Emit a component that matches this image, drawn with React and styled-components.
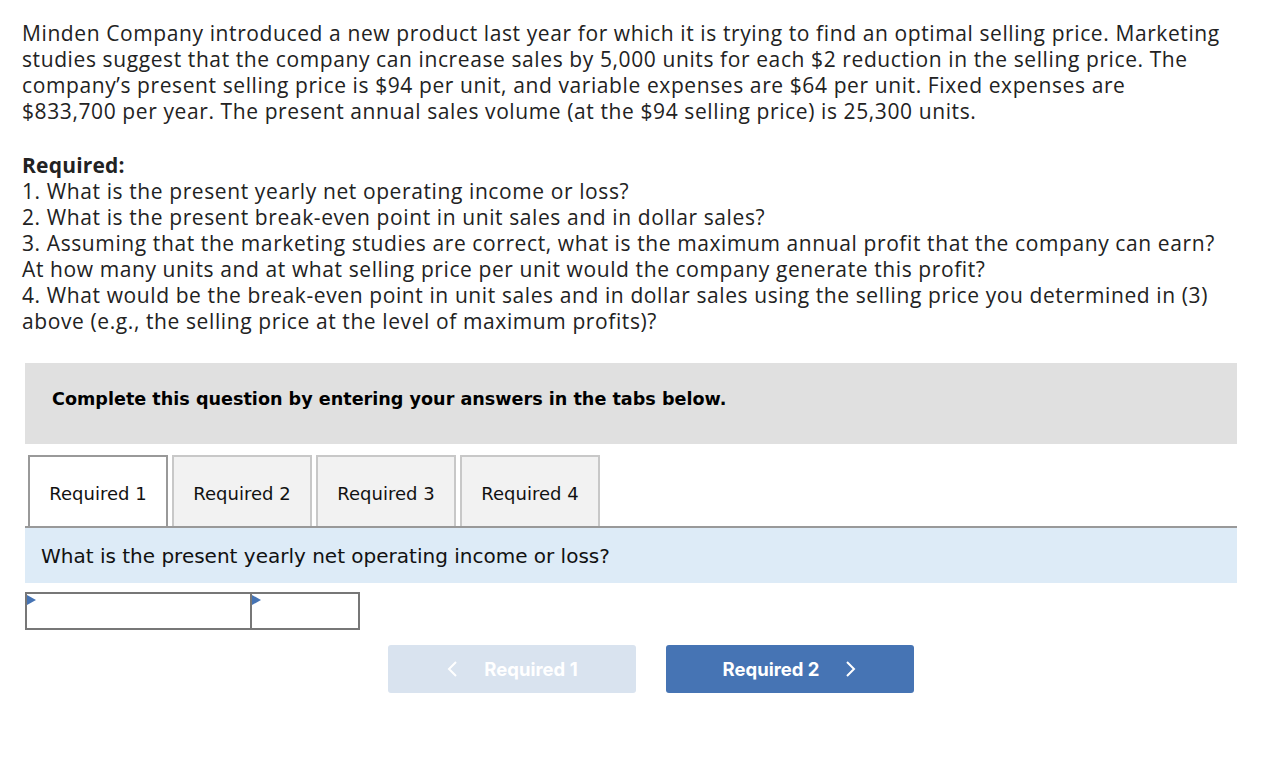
import styled, { createGlobalStyle } from "styled-components";

const Global = createGlobalStyle`
  body {
    margin: 0;
    background: #fff;
  }
`;

const Page = styled.main`
  padding: 20px 25px 0 25px;
  width: 1212px;
`;

const Intro = styled.div`
  font-family: "Open Sans", "Liberation Sans", sans-serif;
  font-size: 21px;
  line-height: 26px;
  color: #222;
  margin-left: -3px;
  letter-spacing: 0.6px;

  span {
    display: block;
    white-space: nowrap;
  }
`;

const Required = styled(Intro)`
  margin-top: 28px;

  strong {
    display: block;
    font-weight: bold;
    letter-spacing: 0.2px;
  }
`;

const Banner = styled.div`
  margin-top: 29px;
  height: 81px;
  box-sizing: border-box;
  background: #e0e0e0;
  padding: 25px 0 0 27px;
  font-family: "DejaVu Sans", Verdana, sans-serif;
  font-weight: bold;
  font-size: 17.6px;
  line-height: 22px;
  color: #000;
`;

const TabList = styled.ul`
  list-style: none;
  margin: 11px 0 0 0;
  padding: 0 0 0 3px;
  display: flex;
  gap: 4px;
  border-bottom: 2px solid #999;
`;

const Tab = styled.li`
  width: 140px;
  height: 71px;
  box-sizing: border-box;
  border: 2px solid ${(p) => (p.$active ? "#999" : "#c8c8c8")};
  border-bottom: none;
  background: ${(p) => (p.$active ? "#fff" : "#f2f2f2")};
  display: flex;
  align-items: center;
  justify-content: center;
  padding-top: 4px;
  font-family: "DejaVu Sans", Verdana, sans-serif;
  font-size: 18px;
  color: #111;
`;

const Question = styled.div`
  height: 55px;
  background: #ddebf7;
  display: flex;
  align-items: center;
  padding-left: 16px;
  font-family: "DejaVu Sans", Verdana, sans-serif;
  font-size: 20px;
  color: #111;
`;

const InputRow = styled.div`
  margin-top: 9px;
  display: flex;
  width: 335px;
  height: 38px;
  box-sizing: border-box;
  border: 2px solid #777;
`;

const Cell = styled.div`
  position: relative;
  width: ${(p) => p.$w}px;
  height: 100%;
  box-sizing: border-box;
  border-right: ${(p) => (p.$last ? "none" : "2px solid #777")};
  background: #fff;

  &::before {
    content: "";
    position: absolute;
    left: 0;
    top: 1px;
    border-top: 5px solid transparent;
    border-bottom: 5px solid transparent;
    border-left: 9px solid #4674b4;
  }
`;

const Nav = styled.div`
  display: flex;
  gap: 30px;
  margin: 15px 0 0 363px;
`;

const NavButton = styled.button`
  width: 248px;
  height: 48px;
  border: none;
  border-radius: 3px;
  background: ${(p) => (p.$disabled ? "#d9e3ef" : "#4674b4")};
  color: #fff;
  font-family: "Inter", "Liberation Sans", sans-serif;
  font-weight: bold;
  font-size: 18.5px;
  display: flex;
  align-items: center;
  justify-content: center;
  gap: 24px;
  padding: 0;
  cursor: pointer;

  svg {
    width: 14px;
    height: 18px;
  }
`;

const Chevron = ({ dir }) => (
  <svg viewBox="0 0 14 18" fill="none" stroke="#fff" strokeWidth="2">
    {dir === "left" ? <path d="M10 2 L3 9 L10 16" /> : <path d="M4 2 L11 9 L4 16" />}
  </svg>
);

export default function App() {
  return (
    <Page>
      <Global />
      <Intro>
        <span>
          Minden Company introduced a new product last year for which it is trying to find an optimal selling price. Marketing
        </span>
        <span>
          studies suggest that the company can increase sales by 5,000 units for each $2 reduction in the selling price. The
        </span>
        <span>
          company’s present selling price is $94 per unit, and variable expenses are $64 per unit. Fixed expenses are
        </span>
        <span>$833,700 per year. The present annual sales volume (at the $94 selling price) is 25,300 units.</span>
      </Intro>
      <Required>
        <strong>Required:</strong>
        <span>1. What is the present yearly net operating income or loss?</span>
        <span>2. What is the present break-even point in unit sales and in dollar sales?</span>
        <span>
          3. Assuming that the marketing studies are correct, what is the maximum annual profit that the company can earn?
        </span>
        <span>At how many units and at what selling price per unit would the company generate this profit?</span>
        <span>
          4. What would be the break-even point in unit sales and in dollar sales using the selling price you determined in (3)
        </span>
        <span>above (e.g., the selling price at the level of maximum profits)?</span>
      </Required>

      <Banner>Complete this question by entering your answers in the tabs below.</Banner>

      <TabList>
        <Tab $active>Required 1</Tab>
        <Tab>Required 2</Tab>
        <Tab>Required 3</Tab>
        <Tab>Required 4</Tab>
      </TabList>
      <Question>What is the present yearly net operating income or loss?</Question>

      <InputRow>
        <Cell $w={225} />
        <Cell $w={106} $last />
      </InputRow>

      <Nav>
        <NavButton $disabled>
          <Chevron dir="left" />
          Required 1
        </NavButton>
        <NavButton>
          Required 2
          <Chevron dir="right" />
        </NavButton>
      </Nav>
    </Page>
  );
}
